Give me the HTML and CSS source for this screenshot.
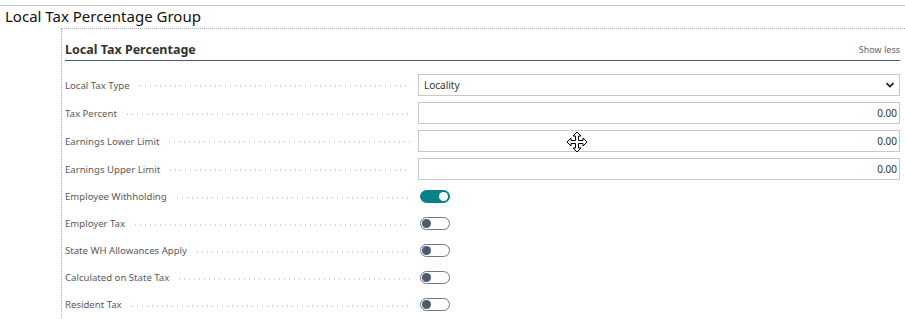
FILE: index.html
```html
<!DOCTYPE html>
<html lang="en">
<head>
    <meta charset="UTF-8">
    <title>Local Tax Percentage Group</title>
    <link rel="stylesheet" href="styles.css">
</head>
<body>
    <div class="group">
        <div class="group-title">Local Tax Percentage Group</div>
        <div class="group-body">
            <div class="section">
                <div class="section-head">
                    <span class="section-title">Local Tax Percentage</span>
                    <span class="show-less">Show less</span>
                </div>

                <div class="row">
                    <div class="label">Local Tax Type</div>
                    <div class="field select">
                        <span>Locality</span>
                        <svg class="chevron" width="10" height="8" viewBox="0 0 10 8"><path d="M1.5 2.2 L5 5.6 L8.5 2.2" fill="none" stroke="#222" stroke-width="1.8"/></svg>
                    </div>
                </div>
                <div class="row">
                    <div class="label">Tax Percent</div>
                    <div class="field number">0.00</div>
                </div>
                <div class="row">
                    <div class="label">Earnings Lower Limit</div>
                    <div class="field number">0.00</div>
                </div>
                <div class="row">
                    <div class="label">Earnings Upper Limit</div>
                    <div class="field number">0.00</div>
                </div>

                <div class="row toggle-row">
                    <div class="label">Employee Withholding</div>
                    <div class="toggle on"><span class="knob"></span></div>
                </div>
                <div class="row toggle-row">
                    <div class="label">Employer Tax</div>
                    <div class="toggle"><span class="knob"></span></div>
                </div>
                <div class="row toggle-row">
                    <div class="label">State WH Allowances Apply</div>
                    <div class="toggle"><span class="knob"></span></div>
                </div>
                <div class="row toggle-row">
                    <div class="label">Calculated on State Tax</div>
                    <div class="toggle"><span class="knob"></span></div>
                </div>
                <div class="row toggle-row">
                    <div class="label">Resident Tax</div>
                    <div class="toggle"><span class="knob"></span></div>
                </div>
            </div>
        </div>
    </div>

    <!-- mouse cursor from the capture -->
    <svg class="cursor" width="22" height="22" viewBox="0 0 22 22">
        <path d="M11 1 L15 5 L12.5 5 L12.5 9.5 L17 9.5 L17 7 L21 11 L17 15 L17 12.5 L12.5 12.5 L12.5 17 L15 17 L11 21 L7 17 L9.5 17 L9.5 12.5 L5 12.5 L5 15 L1 11 L5 7 L5 9.5 L9.5 9.5 L9.5 5 L7 5 Z" fill="#fff" stroke="#000" stroke-width="1"/>
    </svg>
</body>
</html>
```

FILE: styles.css
```css
body {
    margin: 0;
    padding-top: 5px;
    font-family: "Noto Sans", "Open Sans", sans-serif;
    color: #212121;
    background: #fff;
}
.group-title {
    border-top: 1px solid #c6c6c6;
    padding: 0 0 0 5px;
    height: 22px;
    font-size: 15px;
    line-height: 20px;
    color: #111;
}
.group-body {
    margin-left: 61px;
    border-left: 1px dotted #a8a8a8;
    border-top: 1px dotted #a8a8a8;
    padding-bottom: 4px;
}
.section {
    padding: 0 5px 0 3px;
}
.section-head {
    display: flex;
    justify-content: space-between;
    align-items: center;
    height: 31px;
    border-bottom: 1px solid #4d5868;
    margin-bottom: 10px;
}
.section-title {
    font-size: 12.5px;
    font-weight: bold;
    color: #333;
    padding-top: 9px;
}
.show-less {
    font-size: 9px;
    color: #666;
    padding-top: 9px;
}
.row {
    display: flex;
    align-items: center;
    height: 28px;
}
.toggle-row {
    height: 27px;
}
.label {
    flex: 0 0 345px;
    display: flex;
    align-items: center;
    font-size: 9.6px;
    color: #5a5a5a;
    margin-right: 8px;
    white-space: nowrap;
}
.label::after {
    content: "";
    flex: 1;
    margin-left: 8px;
    height: 2px;
    background-image: radial-gradient(circle, #d2d2d2 0.6px, transparent 0.9px);
    background-size: 5px 2px;
    background-repeat: repeat-x;
    margin-top: 2px;
}
.field {
    flex: 1;
    height: 20px;
    border: 1px solid #c8c8c8;
    display: flex;
    align-items: center;
    padding: 0 6px;
    font-size: 10px;
    color: #333;
    box-sizing: content-box;
}
.select {
    justify-content: space-between;
    padding-left: 5px;
    padding-right: 4px;
}
.number {
    justify-content: flex-end;
    padding-right: 2px;
}
.toggle {
    margin-left: 2px;
    width: 26px;
    height: 11px;
    border: 1px solid #6e7683;
    border-radius: 7px;
    display: flex;
    align-items: center;
    padding: 0 1px;
}
.toggle .knob {
    width: 9px;
    height: 9px;
    border-radius: 50%;
    background: #4f5a6e;
}
.toggle.on {
    background: #0a8088;
    border-color: #0a8088;
    justify-content: flex-end;
}
.toggle.on .knob {
    background: #fff;
}
.cursor {
    position: absolute;
    left: 566px;
    top: 131px;
}
```
